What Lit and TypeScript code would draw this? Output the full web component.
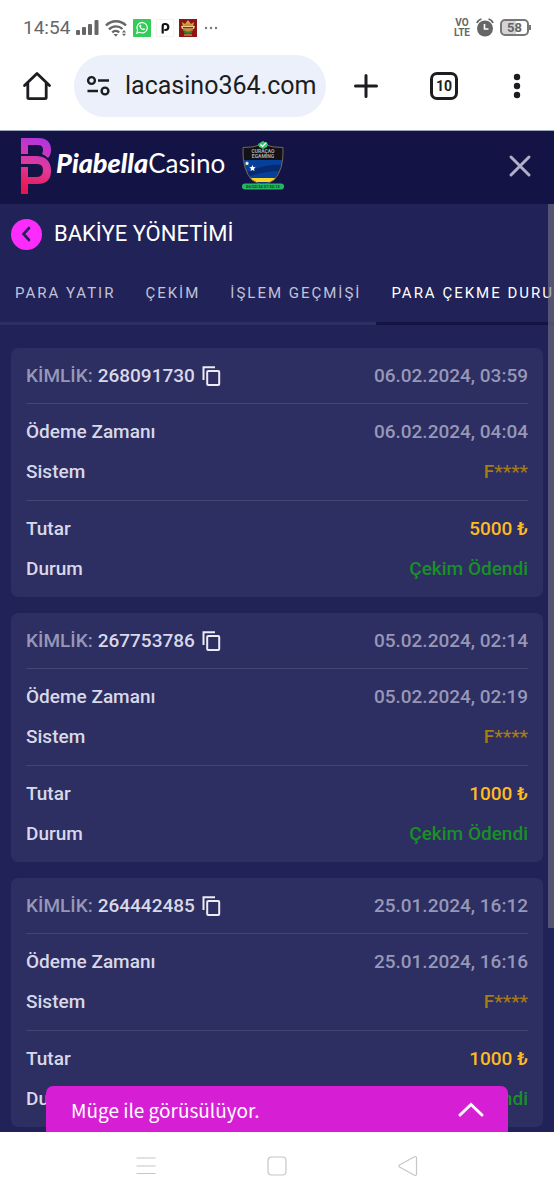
import { LitElement, html, css } from "lit";
import { customElement, property } from "lit/decorators.js";

interface Withdrawal {
  id: string;
  requested: string;
  paid: string;
  system: string;
  amount: string;
  status: string;
}

const WITHDRAWALS: Withdrawal[] = [
  { id: "268091730", requested: "06.02.2024, 03:59", paid: "06.02.2024, 04:04", system: "F****", amount: "5000 ₺", status: "Çekim Ödendi" },
  { id: "267753786", requested: "05.02.2024, 02:14", paid: "05.02.2024, 02:19", system: "F****", amount: "1000 ₺", status: "Çekim Ödendi" },
  { id: "264442485", requested: "25.01.2024, 16:12", paid: "25.01.2024, 16:16", system: "F****", amount: "1000 ₺", status: "Çekim Ödendi" },
];

const TABS = ["PARA YATIR", "ÇEKİM", "İŞLEM GEÇMİŞİ", "PARA ÇEKME DURUMU"];

const reset = css`
  * { box-sizing: border-box; }
  button {
    font: inherit;
    color: inherit;
    background: none;
    border: 0;
    padding: 0;
    margin: 0;
    cursor: pointer;
  }
  svg { display: block; flex: none; }
`;

@customElement("status-bar")
class StatusBar extends LitElement {
  static styles = [reset, css`
    :host {
      display: flex;
      align-items: center;
      justify-content: space-between;
      height: 55px;
      padding: 0 23px;
      color: #666;
      font-size: 19px;
    }
    .group { display: flex; align-items: center; gap: 6px; }
    .apps { display: flex; align-items: center; gap: 5px; }
    .volte {
      font-size: 10px;
      line-height: 10px;
      font-weight: 700;
      text-align: center;
    }
    .battery {
      display: flex;
      align-items: center;
    }
    .cell {
      width: 29px;
      height: 17px;
      border: 2px solid #777;
      border-radius: 5px;
      background: linear-gradient(90deg, #d4d4d4 55%, #fff 55%);
      font-size: 13px;
      line-height: 13px;
      font-weight: 700;
      text-align: center;
    }
    .tip { width: 2px; height: 5px; background: #777; }
  `];

  render() {
    return html`
      <div class="group">
        <span>14:54</span>
        <svg width="23" height="17" viewBox="0 0 23 17" fill="#666">
          <rect x="0" y="11" width="4" height="5" rx="1" />
          <rect x="6" y="8" width="4" height="8" rx="1" />
          <rect x="12" y="5" width="4" height="11" rx="1" />
          <rect x="18.500" y="1" width="4" height="15" rx="1" />
        </svg>
        <svg width="22" height="18" viewBox="0 0 22 18" fill="none" stroke="#666" stroke-width="2.400">
          <path d="M1 6.500a14 14 0 0 1 20 0M4 10.300a9.500 9.500 0 0 1 13.500 -.300M7.200 13.500a5 5 0 0 1 7 0" />
          <path d="M8.500 15h4.500l-2.200 2.800z" fill="#666" stroke="none" />
          <path d="M17 13.500l2-2.500 2 2.500zM17 14.800l2 2.500 2-2.500z" fill="#666" stroke="none" />
        </svg>
        <div class="apps">
          <svg width="18" height="18" viewBox="0 0 18 18">
            <rect width="18" height="18" rx="1" fill="#35cb58" />
            <path d="M3.700 14.300l.900-3a5.200 5.200 0 1 1 2 2z" fill="none" stroke="#fff" stroke-width="1.200" />
            <path d="M6.800 6c.4-.5 1-.4 1.200.1l.4 1-.5.800c.5 1 1.100 1.500 2 1.900l.8-.6 1.300.6c.2.900-.6 1.500-1.400 1.500-2.200-.2-4.300-2.400-4.300-4.200z" fill="#fff" />
          </svg>
          <svg width="18" height="18" viewBox="0 0 18 18" fill="none" stroke="#111" stroke-width="2.200">
            <rect x=".5" y=".5" width="17" height="17" stroke="#f2f2f2" stroke-width="1" />
            <path d="M6.700 14.500V7Q6.700 5 8.700 5H9.300a2.700 2.700 0 0 1 0 6H8.300" />
          </svg>
          <svg width="18" height="18" viewBox="0 0 18 18">
            <rect width="18" height="18" fill="#8d1515" />
            <path d="M3 3l3 2 3-4 3 4 3-2-1 5H4z" fill="#d5a449" />
            <circle cx="9" cy="9.500" r="5" fill="#c98f3b" />
            <path d="M2 7h14l-1 3H3z" fill="#e8cf8e" />
            <path d="M4 8h10v1.500H4z" fill="#98281d" />
            <path d="M5 11q4 3 8 0v3q-4 2-8 0z" fill="#347a35" />
            <path d="M5 15.500h8v1H5z" fill="#e0bb65" />
          </svg>
          <svg width="17" height="4" viewBox="0 0 17 4" fill="#777">
            <circle cx="4" cy="2" r="1.200" /><circle cx="9" cy="2" r="1.200" /><circle cx="14" cy="2" r="1.200" />
          </svg>
        </div>
      </div>
      <div class="group">
        <div class="volte">VO<br />LTE</div>
        <svg width="18" height="19" viewBox="0 0 18 19">
          <circle cx="9" cy="10.500" r="8" fill="#666" />
          <path d="M1 5Q2 2 5.500 1M17 5Q16 2 12.500 1" fill="none" stroke="#666" stroke-width="1.800" />
          <path d="M8.500 6v5h4" fill="none" stroke="#fff" stroke-width="1.600" />
        </svg>
        <div class="battery"><div class="cell">58</div><div class="tip"></div></div>
      </div>
    `;
  }
}

@customElement("browser-bar")
class BrowserBar extends LitElement {
  static styles = [reset, css`
    :host {
      display: flex;
      align-items: center;
      height: 76px;
      padding: 0 28px 14px 22px;
      border-bottom: 1px solid #9da8bd;
      color: #1c1d20;
    }
    .address {
      display: flex;
      align-items: center;
      gap: 14px;
      flex: 1 1 0;
      min-width: 0;
      height: 62px;
      margin-left: 22px;
      padding: 0 8px 0 12px;
      border-radius: 31px;
      background: #ecf0fa;
    }
    .url {
      flex: 1;
      min-width: 0;
      width: 0;
      border: 0;
      padding: 0;
      outline: 0;
      background: none;
      color: inherit;
      font: 25px Roboto, sans-serif;
    }
    .actions {
      display: flex;
      align-items: center;
      justify-content: space-between;
      width: 174px;
      margin-left: 26px;
    }
    .tabs {
      width: 28px;
      height: 28px;
      border: 3px solid #1c1d20;
      border-radius: 7px;
      font-size: 14px;
      line-height: 22px;
      font-weight: 700;
    }
  `];

  render() {
    return html`
      <button aria-label="Home">
        <svg width="30" height="30" viewBox="0 0 30 30" fill="none" stroke="#1c1d20" stroke-width="2.800" stroke-linejoin="round" stroke-linecap="round">
          <path d="M2.500 14.500L15 2.500 27.500 14.500M5.800 12V26.500Q5.800 27.600 7 27.600H23Q24.200 27.600 24.200 26.500V12" />
        </svg>
      </button>
      <div class="address">
        <svg width="25" height="22" viewBox="0 0 25 22" fill="none" stroke="#1c1d20" stroke-width="2.400">
          <circle cx="5.500" cy="5.500" r="3.400" /><path d="M12 5.500H23M1.500 16H12" /><circle cx="19" cy="16" r="3.400" />
        </svg>
        <input class="url" aria-label="Address" .value=${"lacasino364.com"} />
      </div>
      <div class="actions">
        <button aria-label="New tab">
          <svg width="28" height="28" viewBox="0 0 28 28" stroke="#1c1d20" stroke-width="3" stroke-linecap="round">
            <path d="M14 3.500V24.500M3.500 14H24.500" />
          </svg>
        </button>
        <button class="tabs" aria-label="Open tabs">10</button>
        <button aria-label="Menu">
          <svg width="18" height="28" viewBox="0 0 18 28" fill="#1c1d20">
            <circle cx="9" cy="5" r="3.200" /><circle cx="9" cy="14" r="3.200" /><circle cx="9" cy="23" r="3.200" />
          </svg>
        </button>
      </div>
    `;
  }
}

@customElement("site-header")
class SiteHeader extends LitElement {
  static styles = [reset, css`
    :host {
      display: flex;
      align-items: center;
      height: 73px;
      padding: 0 20px 4px;
      background: #131445;
      color: #fff;
    }
    .brand {
      display: flex;
      align-items: center;
      gap: 4px;
      color: inherit;
      text-decoration: none;
    }
    .name { padding-bottom: 6px; font: 26px/32px Lato, sans-serif; }
    .name b { font-size: 27px; font-weight: 900; font-style: italic; }
    .seal { margin-left: 16px; }
    .seal-text { font: 700 5px Roboto, sans-serif; fill: #aaa9b4; }
    .stamp-text { font: 700 4px Roboto, sans-serif; fill: #0d3d25; }
    .close { margin-left: auto; }
  `];

  render() {
    return html`
      <a class="brand" href="#home" aria-label="Piabella Casino">
        <svg width="32" height="56" viewBox="0 0 32 56">
          <defs>
            <linearGradient id="mark" gradientUnits="userSpaceOnUse" x1="4" y1="52" x2="20" y2="2">
              <stop offset="0" stop-color="#e9154f" />
              <stop offset=".5" stop-color="#e03a9a" />
              <stop offset="1" stop-color="#b435dd" />
            </linearGradient>
          </defs>
          <path fill="url(#mark)" d="M1 0H18Q31 0 31 12 31 17 28 20 25 17 22 16 23 14 23 12 23 7 18 7H8V16H1Z" />
          <path fill="url(#mark)" d="M1 18H17Q31 19 31 33 31 46 17 46H8V56H1V29H8V39H17Q23 39 23 32 23 26 17 26H1Z" />
        </svg>
        <span class="name"><b>Piabella</b>Casino</span>
      </a>
      <svg class="seal" width="44" height="50" viewBox="0 0 44 50">
        <defs><clipPath id="shield"><path d="M22 3Q32 7 42 6.500 43 29 33 39L22 45 11 39Q1 29 2 6.500 12 7 22 3Z" /></clipPath></defs>
        <g clip-path="url(#shield)">
          <rect width="44" height="46" fill="#111116" />
          <rect y="19" width="44" height="19" fill="#07409a" />
          <path d="M0 34Q22 22 44 24V30Q20 29 3 38Z" fill="#062b70" />
          <rect y="37" width="44" height="4" fill="#f5d526" />
          <rect y="41" width="44" height="5" fill="#0b3980" />
        </g>
        <path d="M22 3Q32 7 42 6.500 43 29 33 39L22 45 11 39Q1 29 2 6.500 12 7 22 3Z" fill="none" stroke="#77684e" />
        <path d="M17 3L22 0 27 3 26 6 22 8 18 6Z" fill="#31c76a" />
        <path d="M19.500 3.500l2 2 4-4" stroke="#fff" fill="none" stroke-width="1.200" />
        <path fill="#fff" d="M6 20l.7 1.500 1.600.2-1.200 1.100.3 1.600L6 23.600l-1.400.8.3-1.600-1.200-1.100 1.600-.2zM11.500 24l.9 2.100 2.300.2-1.700 1.500.5 2.300-2-1.200-2 1.200.5-2.300-1.700-1.500 2.300-.2z" />
        <text class="seal-text" x="22" y="12" text-anchor="middle">CURAÇAO</text>
        <text class="seal-text" x="22" y="17" text-anchor="middle">EGAMING</text>
        <rect x="1" y="42.500" width="42" height="6" rx="3" fill="#25b763" />
        <text class="stamp-text" x="22" y="47" text-anchor="middle">06/02/24 07:52:15</text>
      </svg>
      <button class="close" aria-label="Kapat">
        <svg width="28" height="28" viewBox="0 0 28 28" stroke="#b1b0c7" stroke-width="3" stroke-linecap="round">
          <path d="M5 5L23 23M23 5L5 23" />
        </svg>
      </button>
    `;
  }
}

@customElement("withdrawal-card")
class WithdrawalCard extends LitElement {
  @property({ attribute: false }) item!: Withdrawal;

  static styles = [reset, css`
    :host {
      display: block;
      padding: 0 15px;
      border-radius: 7px;
      background: #2d2e61;
      color: #d8d8e8;
      font-size: 19px;
      line-height: 24px;
      font-weight: 500;
    }
    .head, .row {
      display: flex;
      align-items: center;
      justify-content: space-between;
    }
    .head { height: 55px; }
    .ident { display: flex; align-items: center; gap: 5px; }
    .muted { color: #9797b7; }
    .details {
      margin: 0;
      padding: 8px 0;
      border-top: 1px solid #444575;
    }
    .row { height: 40px; }
    .row dd { margin: 0; }
    .row .system { color: #a47d14; }
    .row .amount { color: #fdbb20; }
    .row .status { color: #199026; }
  `];

  render() {
    const w = this.item;
    return html`
      <div class="head">
        <div class="ident">
          <span class="muted">KİMLİK:</span>
          <span>${w.id}</span>
          <button aria-label="Kopyala">
            <svg width="22" height="22" viewBox="0 0 22 22" fill="none" stroke="#ececf5" stroke-width="2">
              <path d="M3.500 15V2.200H15" /><rect x="7.200" y="6" width="12" height="14" rx="1" />
            </svg>
          </button>
        </div>
        <span class="muted">${w.requested}</span>
      </div>
      <dl class="details">
        <div class="row"><dt>Ödeme Zamanı</dt><dd class="muted">${w.paid}</dd></div>
        <div class="row"><dt>Sistem</dt><dd class="system">${w.system}</dd></div>
      </dl>
      <dl class="details">
        <div class="row"><dt>Tutar</dt><dd class="amount">${w.amount}</dd></div>
        <div class="row"><dt>Durum</dt><dd class="status">${w.status}</dd></div>
      </dl>
    `;
  }
}

@customElement("app-root")
class AppRoot extends LitElement {
  static styles = [reset, css`
    :host {
      display: flex;
      flex-direction: column;
      min-height: 100vh;
      background: #fff;
      font-family: Roboto, sans-serif;
    }
    .page {
      position: relative;
      flex: 1;
      overflow: hidden;
      background: #212257;
      color: #fff;
    }
    .title {
      display: flex;
      align-items: center;
      gap: 12px;
      height: 60px;
      padding: 0 11px;
    }
    .title h1 { margin: 0; font-size: 22px; line-height: 28px; font-weight: 400; }
    .back {
      display: grid;
      place-items: center;
      width: 31px;
      height: 31px;
      border-radius: 50%;
      background: #fd2bfb;
    }
    .tabs {
      display: flex;
      overflow: hidden;
      white-space: nowrap;
    }
    .tab {
      flex: none;
      height: 61px;
      padding: 0 15px;
      border-bottom: 3px solid #2d2e61;
      color: #c3c3d9;
      font-size: 15px;
      letter-spacing: 2px;
    }
    .tab.active { color: #fff; border-color: #131445; }
    .list {
      display: flex;
      flex-direction: column;
      gap: 16px;
      padding: 23px 11px 5px;
    }
    .thumb {
      position: absolute;
      top: 0;
      right: 0;
      width: 6px;
      height: 78%;
      background: rgba(118, 118, 132, 0.6);
    }
    .chat {
      position: absolute;
      left: 46px;
      right: 46px;
      bottom: 0;
      display: flex;
      align-items: center;
      justify-content: space-between;
      height: 46px;
      padding: 2px 22px 0 25px;
      border-radius: 7px 7px 0 0;
      background: #d61fd5;
      color: #fff;
      font: 19px/30px "Noto Sans CJK SC", sans-serif;
    }
    .nav {
      display: grid;
      grid-template-columns: repeat(3, 131px);
      justify-content: center;
      justify-items: center;
      align-items: center;
      height: 68px;
    }
  `];

  render() {
    return html`
      <status-bar></status-bar>
      <browser-bar></browser-bar>
      <site-header></site-header>
      <main class="page">
        <div class="title">
          <button class="back" aria-label="Geri">
            <svg width="16" height="18" viewBox="0 0 16 18" fill="none" stroke="#212257" stroke-width="2.600" stroke-linecap="round">
              <path d="M10 3L4.500 9 10 15" />
            </svg>
          </button>
          <h1>BAKİYE YÖNETİMİ</h1>
        </div>
        <nav class="tabs">
          ${TABS.map((t, i) => html`<button class="tab ${i === 3 ? "active" : ""}">${t}</button>`)}
        </nav>
        <div class="list">
          ${WITHDRAWALS.map((w) => html`<withdrawal-card .item=${w}></withdrawal-card>`)}
        </div>
        <div class="thumb"></div>
        <button class="chat">
          <span>Müge ile görüsülüyor.</span>
          <svg width="30" height="20" viewBox="0 0 30 20" fill="none" stroke="#fff" stroke-width="3" stroke-linecap="round">
            <path d="M4 15L15 4.500 26 15" />
          </svg>
        </button>
      </main>
      <div class="nav">
        <button aria-label="Recent apps">
          <svg width="20" height="20" viewBox="0 0 20 20" stroke="#c6c6c6" stroke-width="1.200"><path d="M.500 2H19.500M.500 10H19.500M.500 17.500H19.500" /></svg>
        </button>
        <button aria-label="Home screen">
          <svg width="20" height="20" viewBox="0 0 20 20" fill="none" stroke="#c6c6c6" stroke-width="1.200"><rect x="1" y="1" width="18" height="18" rx="3.500" /></svg>
        </button>
        <button aria-label="Back">
          <svg width="20" height="22" viewBox="0 0 20 22" fill="none" stroke="#c6c6c6" stroke-width="1.200" stroke-linejoin="round"><path d="M1.500 10Q.500 11 1.500 12L16.500 20.300Q18.500 21 18.500 19V3Q18.500 1 16.500 1.700Z" /></svg>
        </button>
      </div>
    `;
  }
}
